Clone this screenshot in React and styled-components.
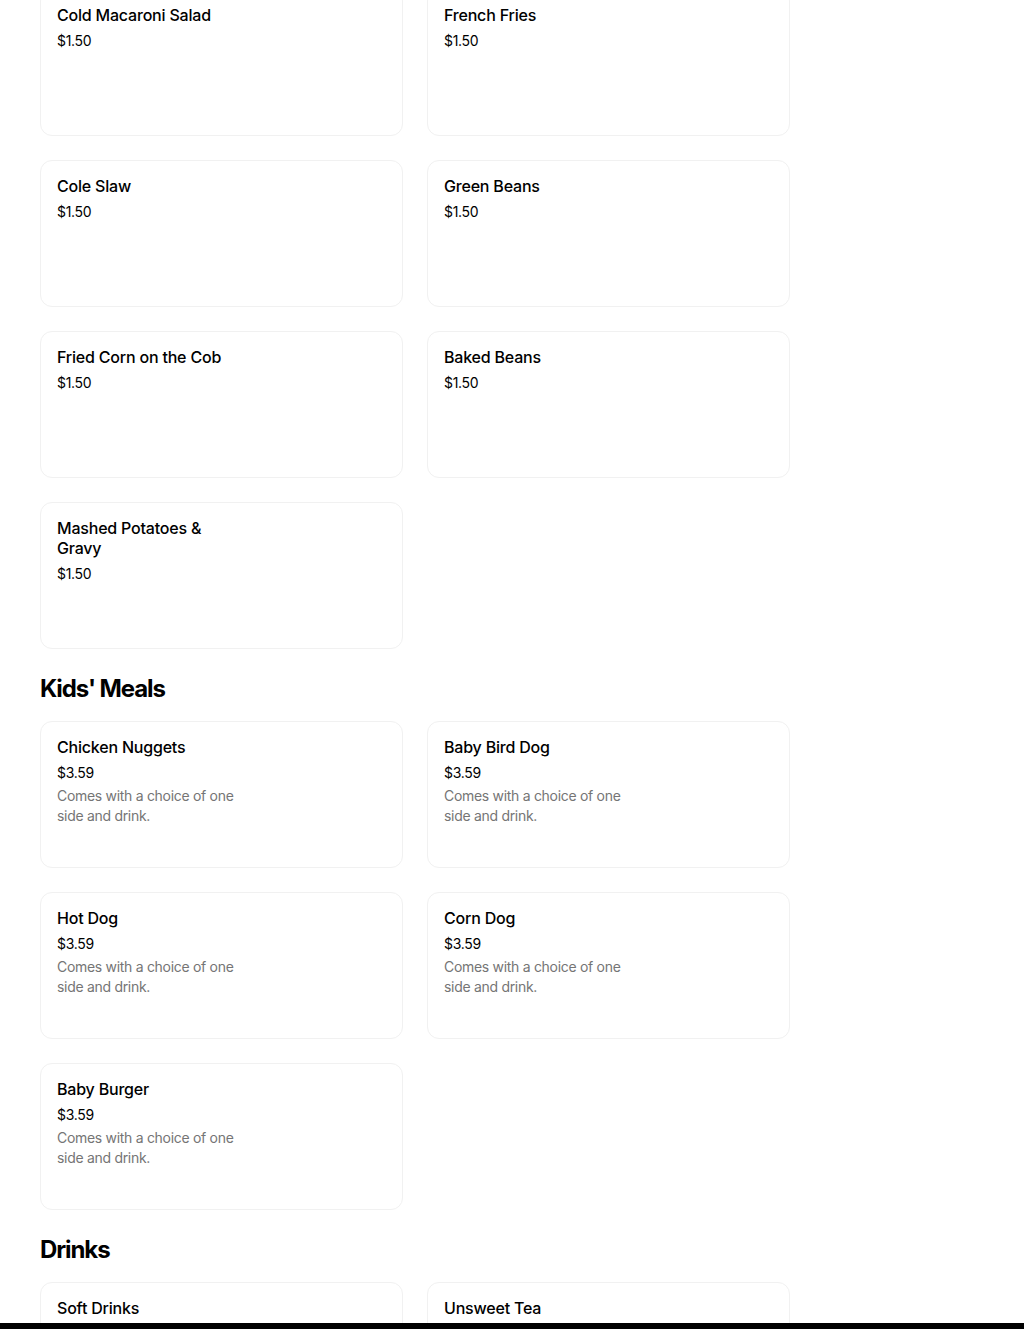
import React from "react";
import styled, { createGlobalStyle } from "styled-components";

const GlobalStyle = createGlobalStyle`
  body {
    margin: 0;
    background: #ffffff;
    font-family: Inter, "Liberation Sans", Arial, sans-serif;
    color: #000000;
    overflow: hidden;
  }
`;

const Page = styled.div`
  height: 1329px;
  overflow: hidden;
`;

const Menu = styled.div`
  width: 750px;
  margin: -11px 0 0 40px;
`;

const Section = styled.section`
  display: flex;
  flex-direction: column;
`;

const Heading = styled.h2`
  margin: 24px 0 16px;
  font-size: 24px;
  line-height: 32px;
  font-weight: 700;
  letter-spacing: -1.1px;
`;

const Grid = styled.div`
  display: grid;
  grid-template-columns: repeat(2, 1fr);
  gap: 24px;
`;

const Card = styled.div`
  box-sizing: border-box;
  height: 147px;
  border: 1px solid #f1f1f1;
  border-radius: 12px;
  padding: 15px 16px;
  display: flex;
  flex-direction: column;
`;

const Name = styled.div`
  max-width: 190px;
  font-size: 16px;
  line-height: 20px;
  font-weight: 500;
  letter-spacing: -0.2px;
`;

const Price = styled.div`
  margin: 6px 0 3px;
  font-size: 14px;
  line-height: 20px;
  letter-spacing: -0.3px;
`;

const Description = styled.div`
  max-width: 190px;
  font-size: 14px;
  line-height: 20px;
  color: #757575;
  letter-spacing: -0.3px;
`;

const BottomBar = styled.div`
  position: fixed;
  left: 0;
  right: 0;
  bottom: 0;
  height: 6px;
  background: #000000;
`;

const kidsNote = "Comes with a choice of one side and drink.";

const sections = [
  {
    items: [
      { name: "Cold Macaroni Salad", price: "$1.50" },
      { name: "French Fries", price: "$1.50" },
      { name: "Cole Slaw", price: "$1.50" },
      { name: "Green Beans", price: "$1.50" },
      { name: "Fried Corn on the Cob", price: "$1.50" },
      { name: "Baked Beans", price: "$1.50" },
      { name: "Mashed Potatoes & Gravy", price: "$1.50" },
    ],
  },
  {
    title: "Kids' Meals",
    items: [
      { name: "Chicken Nuggets", price: "$3.59", desc: kidsNote },
      { name: "Baby Bird Dog", price: "$3.59", desc: kidsNote },
      { name: "Hot Dog", price: "$3.59", desc: kidsNote },
      { name: "Corn Dog", price: "$3.59", desc: kidsNote },
      { name: "Baby Burger", price: "$3.59", desc: kidsNote },
    ],
  },
  {
    title: "Drinks",
    items: [
      { name: "Soft Drinks", price: "$1.99" },
      { name: "Unsweet Tea", price: "$1.99" },
    ],
  },
];

const MenuItem = ({ item }) => (
  <Card>
    <Name>{item.name}</Name>
    <Price>{item.price}</Price>
    {item.desc ? <Description>{item.desc}</Description> : null}
  </Card>
);

export default function App() {
  return (
    <Page>
      <GlobalStyle />
      <Menu>
        {sections.map((section, i) => (
          <Section key={i}>
            {section.title ? <Heading>{section.title}</Heading> : null}
            <Grid>
              {section.items.map(item => (
                <MenuItem key={item.name} item={item} />
              ))}
            </Grid>
          </Section>
        ))}
      </Menu>
      <BottomBar />
    </Page>
  );
}
